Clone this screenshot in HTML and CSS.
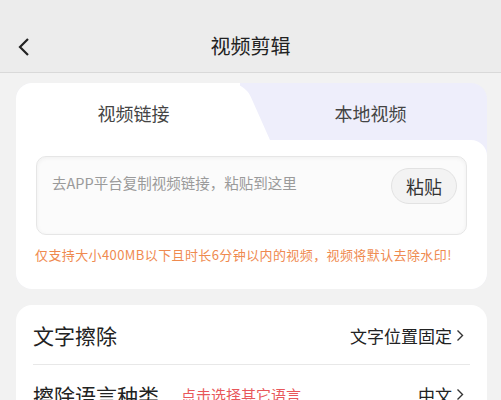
FILE: index.html
```html
<!DOCTYPE html>
<html lang="zh">
<head>
<meta charset="utf-8">
<title>视频剪辑</title>
<link rel="stylesheet" href="styles.css">
</head>
<body>
<header class="topbar">
  <span class="back">
    <svg width="14" height="20" viewBox="0 0 14 20"><polyline points="11,2 3,10 11,18" fill="none" stroke="#222" stroke-width="2.2" stroke-linejoin="miter"/></svg>
  </span>
  <h1 class="title">视频剪辑</h1>
</header>
<main class="page">
  <section class="card upload">
    <div class="tabs">
      <div class="tab tab-active">视频链接</div>
      <div class="tab">本地视频</div>
    </div>
    <div class="card-body">
      <div class="input-box">
        <span class="placeholder">去APP平台复制视频链接，粘贴到这里</span>
        <button class="paste">粘贴</button>
      </div>
      <p class="notice">仅支持大小400MB以下且时长6分钟以内的视频，视频将默认去除水印!</p>
    </div>
  </section>
  <section class="card settings">
    <div class="row">
      <span class="row-label">文字擦除</span>
      <span class="row-value">文字位置固定<svg class="chev" width="8" height="13" viewBox="0 0 8 13"><polyline points="1.5,1.5 6.5,6.5 1.5,11.5" fill="none" stroke="#333" stroke-width="1.4"/></svg></span>
    </div>
    <div class="row">
      <span class="row-label">擦除语言种类<span class="hint">点击选择其它语言</span></span>
      <span class="row-value">中文<svg class="chev" width="8" height="13" viewBox="0 0 8 13"><polyline points="1.5,1.5 6.5,6.5 1.5,11.5" fill="none" stroke="#333" stroke-width="1.4"/></svg></span>
    </div>
  </section>
</main>
</body>
</html>
```
FILE: styles.css
```css
* { box-sizing: border-box; }
html, body { margin: 0; padding: 0; }
body {
  background: #f2f2f2;
  font-family: "Noto Sans CJK SC", "Noto Sans", sans-serif;
  color: #222;
  width: 501px;
  height: 400px;
  overflow: hidden;
}
.topbar {
  height: 73px;
  background: #ececec;
  border-bottom: 1px solid #d9d9d9;
  display: flex;
  align-items: center;
  justify-content: center;
  position: relative;
  padding-top: 19px;
}
.back {
  position: absolute;
  left: 17px;
  top: 37px;
  display: flex;
}
.title {
  margin: 0;
  font-size: 20px;
  font-weight: 400;
  color: #222;
  line-height: 1;
}
.page {
  padding: 10px 14px 0 16px;
  display: flex;
  flex-direction: column;
  gap: 16px;
}
.card {
  border-radius: 16px;
  overflow: hidden;
}
.upload {
  background: #eeeefb;
}
.tabs {
  display: flex;
  height: 57px;
}
.tab {
  flex: 1;
  display: flex;
  align-items: center;
  justify-content: center;
  font-size: 18px;
  color: #444;
  padding-top: 2px;
  position: relative;
}
.tab-active {
  background: #fff;
  flex: 0 0 224px;
  padding-left: 11px;
  z-index: 1;
}
.tab-active::after {
  content: "";
  position: absolute;
  top: 0;
  left: 170px;
  width: 84px;
  height: 100%;
  background: #fff;
  transform: skewX(24deg);
  transform-origin: bottom left;
  border-top-right-radius: 14px;
  z-index: -1;
}
.tab:not(.tab-active) {
  padding-left: 14px;
}
.card-body {
  background: #fff;
  border-top-right-radius: 16px;
  padding: 16px 20px 24px 20px;
  position: relative;
  z-index: 2;
}
.input-box {
  height: 79px;
  background: #fbfbfb;
  border: 1px solid #e6e6e6;
  border-radius: 10px;
  box-shadow: inset 0 1px 4px rgba(0, 0, 0, 0.05);
  display: flex;
  justify-content: space-between;
  align-items: flex-start;
  padding: 11px 9px 0 15px;
}
.placeholder {
  font-size: 14.5px;
  color: #9a9a9a;
  margin-top: 4px;
}
.paste {
  width: 66px;
  height: 36px;
  border-radius: 18px;
  background: #f3f3f3;
  border: 1px solid #e2e2e2;
  font-family: inherit;
  font-size: 18px;
  color: #333;
  padding: 0;
}
.notice {
  margin: 10px 0 0 -1px;
  font-size: 13px;
  letter-spacing: 0.4px;
  color: #ef8a4f;
  line-height: 20px;
  white-space: nowrap;
}
.settings {
  background: #fff;
  padding: 0 17px;
}
.row {
  height: 59px;
  display: flex;
  align-items: center;
  justify-content: space-between;
  padding-top: 1px;
}
.row + .row {
  border-top: 1px solid #e8e8e8;
}
.row-label {
  font-size: 21px;
  color: #222;
  display: flex;
  align-items: center;
}
.hint {
  font-size: 15px;
  color: #e8575a;
  margin-left: 22px;
}
.row-value {
  font-size: 17px;
  color: #222;
  display: flex;
  align-items: center;
  margin-right: 6px;
}
.chev {
  margin-left: 4px;
  display: block;
}
```
